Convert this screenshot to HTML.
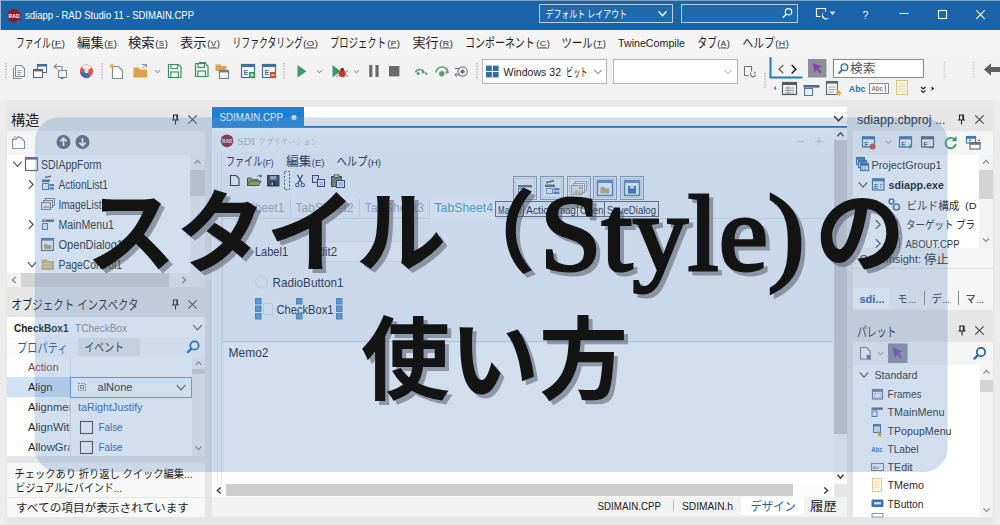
<!DOCTYPE html>
<html lang="ja"><head><meta charset="utf-8"><title>スタイル（Style)の使い方</title>
<style>
html,body{margin:0;padding:0;background:#f0f0f0;overflow:hidden}
body{width:1000px;height:525px;font-family:"Liberation Sans",sans-serif}
svg{display:block;position:absolute;left:0;top:0}
text{white-space:pre}
.j{font-family:"Liberation Sans","Noto Sans CJK JP",sans-serif}
.js{font-family:"Liberation Serif","Noto Serif CJK SC",serif}
</style></head><body>
<svg width="1000" height="525" viewBox="0 0 1000 525" shape-rendering="auto">
<rect x="0" y="0" width="1000" height="525" fill="#f0f0f0"/>
<rect x="0" y="0" width="1000" height="30" fill="#1a64a9"/>
<rect x="0" y="0" width="1000" height="1" fill="#7fa3c6"/>
<rect x="0" y="0" width="1" height="30" fill="#9db7d0"/>
<circle cx="14" cy="15.5" r="6.8" fill="#8e1b26"/>
<text x="8.6" y="17.60" font-family="Liberation Sans, sans-serif" font-size="5.6" fill="#fff" font-weight="bold" textLength="11.0" lengthAdjust="spacingAndGlyphs">RAD</text>
<text x="25" y="19.24" font-family="Liberation Sans, sans-serif" font-size="11" fill="#fff" textLength="169.0" lengthAdjust="spacingAndGlyphs">sdiapp - RAD Studio 11 - SDIMAIN.CPP</text>
<rect x="539.5" y="4.5" width="133.0" height="18.0" fill="#1f69ad" stroke="#b9cfe6" stroke-width="1"/>
<text class="j" x="545.5" y="17.6" font-size="10.5" fill="#fff" textLength="81.5" lengthAdjust="spacingAndGlyphs">デフォルト レイアウト</text>
<path d="M658.5 11.3L662.5 15.7L666.5 11.3" fill="none" stroke="#fff" stroke-width="1.3"/>
<rect x="681.5" y="4.5" width="116.0" height="18.0" fill="#1f69ad" stroke="#b9cfe6" stroke-width="1"/>
<circle cx="788.5" cy="11.8" r="3.2" fill="none" stroke="#fff" stroke-width="1.1"/>
<line x1="786.2" y1="14.2" x2="782.6" y2="17.8" stroke="#fff" stroke-width="1.3"/>
<path d="M816.5 8.5h9v3M816.5 8.5v8h4" fill="none" stroke="#fff" stroke-width="1.2"/>
<path d="M824 12a4 4 0 1 0 5.5 5.2a3.4 3.4 0 0 1-5.5-5.2z" fill="#fff"/>
<path d="M829.5 11.5h6l-3 3.6z" fill="#d6e4f2"/>
<text x="862.4" y="18.76" font-family="Liberation Sans, sans-serif" font-size="10.5" fill="#fff">?</text>
<line x1="899.5" y1="13.5" x2="908.5" y2="13.5" stroke="#fff" stroke-width="1.1"/>
<rect x="938.5" y="10.5" width="8.0" height="8.0" fill="none" stroke="#fff" stroke-width="1.1"/>
<path d="M976.3 10.399999999999999L984.7 18.8M984.7 10.399999999999999L976.3 18.8" fill="none" stroke="#fff" stroke-width="1.1"/>
<rect x="0" y="30" width="1000" height="27" fill="#f4f4f4"/>
<text class="j" x="16" y="46.8" font-size="13" fill="#1e1e1e" textLength="34.8" lengthAdjust="spacingAndGlyphs">ファイル</text>
<text x="51.3" y="46.57" font-family="Liberation Sans, sans-serif" font-size="9.4" fill="#1e1e1e">(</text>
<text x="54.8" y="46.32" font-family="Liberation Sans, sans-serif" font-size="7.6" fill="#1e1e1e" textLength="6.4" lengthAdjust="spacingAndGlyphs">F</text>
<text x="61.8" y="46.57" font-family="Liberation Sans, sans-serif" font-size="9.4" fill="#1e1e1e">)</text>
<line x1="54.6" y1="47.9" x2="61.4" y2="47.9" stroke="#1e1e1e" stroke-width="0.9"/>
<text class="j" x="77" y="46.8" font-size="13" fill="#1e1e1e" textLength="26.8" lengthAdjust="spacingAndGlyphs">編集</text>
<text x="104.3" y="46.57" font-family="Liberation Sans, sans-serif" font-size="9.4" fill="#1e1e1e">(</text>
<text x="107.8" y="46.32" font-family="Liberation Sans, sans-serif" font-size="7.6" fill="#1e1e1e" textLength="5.4" lengthAdjust="spacingAndGlyphs">E</text>
<text x="113.8" y="46.57" font-family="Liberation Sans, sans-serif" font-size="9.4" fill="#1e1e1e">)</text>
<line x1="107.6" y1="47.9" x2="113.4" y2="47.9" stroke="#1e1e1e" stroke-width="0.9"/>
<text class="j" x="128" y="46.8" font-size="13" fill="#1e1e1e" textLength="26.6" lengthAdjust="spacingAndGlyphs">検索</text>
<text x="155.3" y="46.57" font-family="Liberation Sans, sans-serif" font-size="9.4" fill="#1e1e1e">(</text>
<text x="158.8" y="46.32" font-family="Liberation Sans, sans-serif" font-size="7.6" fill="#1e1e1e" textLength="5.4" lengthAdjust="spacingAndGlyphs">S</text>
<text x="164.8" y="46.57" font-family="Liberation Sans, sans-serif" font-size="9.4" fill="#1e1e1e">)</text>
<line x1="158.6" y1="47.9" x2="164.4" y2="47.9" stroke="#1e1e1e" stroke-width="0.9"/>
<text class="j" x="180" y="46.8" font-size="13" fill="#1e1e1e" textLength="26.5" lengthAdjust="spacingAndGlyphs">表示</text>
<text x="207.3" y="46.57" font-family="Liberation Sans, sans-serif" font-size="9.4" fill="#1e1e1e">(</text>
<text x="210.8" y="46.32" font-family="Liberation Sans, sans-serif" font-size="7.6" fill="#1e1e1e" textLength="5.4" lengthAdjust="spacingAndGlyphs">V</text>
<text x="216.8" y="46.57" font-family="Liberation Sans, sans-serif" font-size="9.4" fill="#1e1e1e">)</text>
<line x1="210.6" y1="47.9" x2="216.4" y2="47.9" stroke="#1e1e1e" stroke-width="0.9"/>
<text class="j" x="232.5" y="46.8" font-size="13" fill="#1e1e1e" textLength="70.4" lengthAdjust="spacingAndGlyphs">リファクタリング</text>
<text x="303.3" y="46.57" font-family="Liberation Sans, sans-serif" font-size="9.4" fill="#1e1e1e">(</text>
<text x="306.8" y="46.32" font-family="Liberation Sans, sans-serif" font-size="7.6" fill="#1e1e1e" textLength="7.4" lengthAdjust="spacingAndGlyphs">O</text>
<text x="314.8" y="46.57" font-family="Liberation Sans, sans-serif" font-size="9.4" fill="#1e1e1e">)</text>
<line x1="306.6" y1="47.9" x2="314.4" y2="47.9" stroke="#1e1e1e" stroke-width="0.9"/>
<text class="j" x="330" y="46.8" font-size="13" fill="#1e1e1e" textLength="56" lengthAdjust="spacingAndGlyphs">プロジェクト</text>
<text x="387.3" y="46.57" font-family="Liberation Sans, sans-serif" font-size="9.4" fill="#1e1e1e">(</text>
<text x="390.8" y="46.32" font-family="Liberation Sans, sans-serif" font-size="7.6" fill="#1e1e1e" textLength="5.4" lengthAdjust="spacingAndGlyphs">P</text>
<text x="396.8" y="46.57" font-family="Liberation Sans, sans-serif" font-size="9.4" fill="#1e1e1e">)</text>
<line x1="390.6" y1="47.9" x2="396.4" y2="47.9" stroke="#1e1e1e" stroke-width="0.9"/>
<text class="j" x="412.5" y="46.8" font-size="13" fill="#1e1e1e" textLength="26.2" lengthAdjust="spacingAndGlyphs">実行</text>
<text x="439.3" y="46.57" font-family="Liberation Sans, sans-serif" font-size="9.4" fill="#1e1e1e">(</text>
<text x="442.8" y="46.32" font-family="Liberation Sans, sans-serif" font-size="7.6" fill="#1e1e1e" textLength="6.4" lengthAdjust="spacingAndGlyphs">R</text>
<text x="449.8" y="46.57" font-family="Liberation Sans, sans-serif" font-size="9.4" fill="#1e1e1e">)</text>
<line x1="442.6" y1="47.9" x2="449.4" y2="47.9" stroke="#1e1e1e" stroke-width="0.9"/>
<text class="j" x="465" y="46.8" font-size="13" fill="#1e1e1e" textLength="69.8" lengthAdjust="spacingAndGlyphs">コンポーネント</text>
<text x="536.3" y="46.57" font-family="Liberation Sans, sans-serif" font-size="9.4" fill="#1e1e1e">(</text>
<text x="539.8" y="46.32" font-family="Liberation Sans, sans-serif" font-size="7.6" fill="#1e1e1e" textLength="6.4" lengthAdjust="spacingAndGlyphs">C</text>
<text x="546.8" y="46.57" font-family="Liberation Sans, sans-serif" font-size="9.4" fill="#1e1e1e">)</text>
<line x1="539.6" y1="47.9" x2="546.4" y2="47.9" stroke="#1e1e1e" stroke-width="0.9"/>
<text class="j" x="561.5" y="46.8" font-size="13" fill="#1e1e1e" textLength="31.3" lengthAdjust="spacingAndGlyphs">ツール</text>
<text x="593.3" y="46.57" font-family="Liberation Sans, sans-serif" font-size="9.4" fill="#1e1e1e">(</text>
<text x="596.8" y="46.32" font-family="Liberation Sans, sans-serif" font-size="7.6" fill="#1e1e1e" textLength="5.4" lengthAdjust="spacingAndGlyphs">T</text>
<text x="602.8" y="46.57" font-family="Liberation Sans, sans-serif" font-size="9.4" fill="#1e1e1e">)</text>
<line x1="596.6" y1="47.9" x2="602.4" y2="47.9" stroke="#1e1e1e" stroke-width="0.9"/>
<text x="618" y="46.54" font-family="Liberation Sans, sans-serif" font-size="11" fill="#1e1e1e" textLength="67.0" lengthAdjust="spacingAndGlyphs">TwineCompile</text>
<text class="j" x="697.5" y="46.8" font-size="13" fill="#1e1e1e" textLength="19.4" lengthAdjust="spacingAndGlyphs">タブ</text>
<text x="717.3" y="46.57" font-family="Liberation Sans, sans-serif" font-size="9.4" fill="#1e1e1e">(</text>
<text x="720.8" y="46.32" font-family="Liberation Sans, sans-serif" font-size="7.6" fill="#1e1e1e" textLength="5.4" lengthAdjust="spacingAndGlyphs">A</text>
<text x="726.8" y="46.57" font-family="Liberation Sans, sans-serif" font-size="9.4" fill="#1e1e1e">)</text>
<line x1="720.6" y1="47.9" x2="726.4" y2="47.9" stroke="#1e1e1e" stroke-width="0.9"/>
<text class="j" x="742.5" y="46.8" font-size="13" fill="#1e1e1e" textLength="32.4" lengthAdjust="spacingAndGlyphs">ヘルプ</text>
<text x="775.3" y="46.57" font-family="Liberation Sans, sans-serif" font-size="9.4" fill="#1e1e1e">(</text>
<text x="778.8" y="46.32" font-family="Liberation Sans, sans-serif" font-size="7.6" fill="#1e1e1e" textLength="6.4" lengthAdjust="spacingAndGlyphs">H</text>
<text x="785.8" y="46.57" font-family="Liberation Sans, sans-serif" font-size="9.4" fill="#1e1e1e">)</text>
<line x1="778.6" y1="47.9" x2="785.4" y2="47.9" stroke="#1e1e1e" stroke-width="0.9"/>
<rect x="0" y="57" width="1000" height="43" fill="#f2f2f2"/>
<line x1="5.8" y1="63" x2="5.8" y2="79" stroke="#b0b0b0" stroke-width="1.5" stroke-dasharray="1.2 1.6"/>
<path d="M15.5 65.5h6l3 3v8h-9zM13.5 67.5v11h8" fill="none" stroke="#858b93" stroke-width="1.1"/>
<path d="M17.5 70.5h4M17.5 72.5h4M17.5 74.5h3" fill="none" stroke="#858b93" stroke-width="0.8"/>
<rect x="37.5" y="64.5" width="9.0" height="8.0" fill="#fff" stroke="#4a6f9a" stroke-width="1.1"/>
<rect x="37" y="64" width="10" height="2.6" fill="#3f6ea5"/>
<rect x="33.5" y="69.5" width="9.0" height="8.0" fill="#fff" stroke="#5b6470" stroke-width="1.1"/>
<rect x="33" y="69" width="10" height="2.4" fill="#5b6470"/>
<path d="M54 66.5h8v4M57 63.8l-3 2.7l3 2.7" fill="none" stroke="#858b93" stroke-width="1.1"/>
<rect x="58.5" y="70.5" width="8.0" height="7.0" fill="none" stroke="#858b93" stroke-width="1.1"/>
<path d="M62 79.5l2.5-2h-5z" fill="#3f6ea5"/>
<circle cx="86.5" cy="71" r="6.6" fill="#d9534a"/>
<path d="M81.5 67a6.6 6.6 0 0 1 10.5 0.5l-5.5 3.5z" fill="#e9edf3"/>
<path d="M80.2 72.5l6.3-1.5l3.8 6a6.6 6.6 0 0 1-10.1-4.5z" fill="#3c6fb0"/>
<circle cx="86.5" cy="71" r="2.2" fill="#f3d9d6"/>
<line x1="102" y1="63" x2="102" y2="79" stroke="#b0b0b0" stroke-width="1.5" stroke-dasharray="1.2 1.6"/>
<path d="M112.5 66.5h6l4 4v8h-10z" fill="#fdfdfd" stroke="#858b93" stroke-width="1.1"/>
<path d="M112 63.5v5M109.5 66h5M110.2 64.2l3.6 3.6M113.8 64.2l-3.6 3.6" fill="none" stroke="#e8a33a" stroke-width="0.9"/>
<path d="M133.5 67.5h5l1.5 2h7v8h-13.5z" fill="#e2a045"/>
<path d="M142 64.5h4.5v3M146.5 64.5l-4 3.5" fill="none" stroke="#8a8f96" stroke-width="1"/>
<path d="M155.0 70.2L157.5 72.8L160.0 70.2" fill="none" stroke="#777" stroke-width="1"/>
<path d="M168.5 64.5h10l2.5 2.5v10.5h-12.5z" fill="#eef6f0" stroke="#3f8f63" stroke-width="1.2"/>
<rect x="171" y="64.5" width="6.5" height="4" fill="none" stroke="#3f8f63" stroke-width="1.1"/>
<rect x="170.8" y="72" width="7.6" height="5.5" fill="none" stroke="#3f8f63" stroke-width="1.1"/>
<path d="M195.5 63.5h10l2.5 2.5v10.5h-12.5z" fill="#eef6f0" stroke="#3f8f63" stroke-width="1.2"/>
<rect x="198" y="63.5" width="6.5" height="4" fill="none" stroke="#3f8f63" stroke-width="1.1"/>
<rect x="197.8" y="71" width="7.6" height="5.5" fill="none" stroke="#3f8f63" stroke-width="1.1"/>
<rect x="199" y="62" width="7" height="2" fill="#3f8f63"/>
<path d="M215.5 64.5h5l1 1.5h5v5h-11z" fill="#dba24b"/>
<rect x="219.5" y="70.5" width="9.0" height="8.0" fill="#f4f6f8" stroke="#6e7f94" stroke-width="1.1"/>
<rect x="219" y="70" width="10" height="2.4" fill="#6e7f94"/>
<rect x="241.5" y="64.5" width="13.0" height="13.0" fill="#f4f8fb" stroke="#3f6f9f" stroke-width="1.2"/>
<rect x="241" y="64" width="14" height="3" fill="#3f6f9f"/>
<text x="243.6" y="75.01" font-family="Liberation Sans, sans-serif" font-size="7" fill="#3f6f9f" font-weight="bold">E</text>
<rect x="249" y="72" width="6" height="6" fill="#3f9060"/>
<path d="M250.3 75h3.4M252 73.3v3.4" fill="none" stroke="#fff" stroke-width="1"/>
<rect x="262.5" y="64.5" width="13.0" height="13.0" fill="#f4f8fb" stroke="#3f6f9f" stroke-width="1.2"/>
<rect x="262" y="64" width="14" height="3" fill="#3f6f9f"/>
<text x="264.6" y="75.01" font-family="Liberation Sans, sans-serif" font-size="7" fill="#3f6f9f" font-weight="bold">E</text>
<rect x="270" y="72" width="6" height="6" fill="#cf4b3f"/>
<path d="M271.3 75h3.4" fill="none" stroke="#fff" stroke-width="1"/>
<line x1="284" y1="63" x2="284" y2="79" stroke="#b0b0b0" stroke-width="1.5" stroke-dasharray="1.2 1.6"/>
<path d="M297.5 65l9 6.2l-9 6.2z" fill="#3f9a6a"/>
<path d="M317.0 70.2L319.5 72.8L322.0 70.2" fill="none" stroke="#777" stroke-width="1"/>
<path d="M332.5 65l8 6.2l-8 6.2z" fill="#3f9a6a"/>
<circle cx="342.2" cy="73.6" r="3.6" fill="#c7382f"/>
<circle cx="342.2" cy="69.6" r="1.8" fill="#7a2a22"/>
<path d="M338 71.5l-1.5-1M346.4 71.5l1.5-1M338 75.5l-1.6 1M346.4 75.5l1.6 1" fill="none" stroke="#7a2a22" stroke-width="0.8"/>
<path d="M354.0 70.2L356.5 72.8L359.0 70.2" fill="none" stroke="#777" stroke-width="1"/>
<rect x="369.2" y="65" width="3.2" height="12" fill="#6b6b6b"/>
<rect x="375.4" y="65" width="3.2" height="12" fill="#6b6b6b"/>
<rect x="389" y="66" width="10.4" height="10.4" fill="#6b6b6b"/>
<path d="M415.5 72.5a4.5 4 0 0 1 8.5-0.5" fill="none" stroke="#5d9a7e" stroke-width="1.4"/>
<path d="M422.2 70.2l3.2 2.6l-3.8 1z" fill="#5d9a7e"/>
<circle cx="418.2" cy="73.6" r="1.5" fill="#5d9a7e"/>
<circle cx="426.2" cy="73.8" r="1.2" fill="#5d9a7e"/>
<path d="M436 72.5a6 5.4 0 0 1 12 0" fill="none" stroke="#5d9a7e" stroke-width="1.5"/>
<path d="M446 70.4l3 2.4l-3.6 1.2z" fill="#5d9a7e"/>
<circle cx="441.8" cy="73.8" r="2.7" fill="#5d9a7e"/>
<circle cx="462.6" cy="71.5" r="4.6" fill="none" stroke="#7b8088" stroke-width="1.2"/>
<circle cx="462.6" cy="71.5" r="2.1" fill="#6b7078"/>
<path d="M455 68.5h5M455 74.8h5M456.8 73l-2 1.8l2 1.8" fill="none" stroke="#6b7078" stroke-width="1"/>
<line x1="477" y1="63" x2="477" y2="79" stroke="#b0b0b0" stroke-width="1.5" stroke-dasharray="1.2 1.6"/>
<rect x="482.5" y="59.5" width="124.0" height="24.0" fill="#fff" stroke="#b4b4b4" stroke-width="1"/>
<rect x="486" y="65.6" width="5.8" height="5.4" fill="#2f6ea8"/>
<rect x="492.8" y="65.6" width="5.8" height="5.4" fill="#2f6ea8"/>
<rect x="486" y="72" width="5.8" height="5.4" fill="#2f6ea8"/>
<rect x="492.8" y="72" width="5.8" height="5.4" fill="#2f6ea8"/>
<text x="503.5" y="76.08" font-family="Liberation Sans, sans-serif" font-size="11.4" fill="#222" textLength="57.5" lengthAdjust="spacingAndGlyphs">Windows 32</text>
<text class="j" x="566" y="76.6" font-size="12" fill="#222" textLength="21.5" lengthAdjust="spacingAndGlyphs">ビット</text>
<path d="M594.3 69.89999999999999L598 73.7L601.7 69.89999999999999" fill="none" stroke="#999" stroke-width="1.1"/>
<rect x="613.5" y="59.5" width="124.0" height="24.0" fill="#fff" stroke="#b4b4b4" stroke-width="1"/>
<path d="M724.3 69.89999999999999L728 73.7L731.7 69.89999999999999" fill="none" stroke="#c4c4c4" stroke-width="1.1"/>
<path d="M744.5 66.5h7v5M744.5 66.5v9h4" fill="none" stroke="#6f747b" stroke-width="1.1"/>
<path d="M751 72.5a2.6 2.6 0 1 0 4.6 2.2" fill="none" stroke="#6f747b" stroke-width="1.1"/>
<path d="M753.5 71.5l2.2 0.6l-0.8 2z" fill="#6f747b"/>
<line x1="765" y1="73" x2="765" y2="89" stroke="#b0b0b0" stroke-width="1.5" stroke-dasharray="1.2 1.6"/>
<path d="M770.5 57v20.5h32" fill="none" stroke="#2478bd" stroke-width="2"/>
<path d="M783.3000000000001 65.0L779.1 69.2L783.3000000000001 73.4" fill="none" stroke="#555" stroke-width="1.2"/>
<path d="M791.6999999999999 65.0L795.9 69.2L791.6999999999999 73.4" fill="none" stroke="#1a1a1a" stroke-width="1.4"/>
<rect x="808" y="59" width="18.5" height="18.5" fill="#8d8f95"/>
<path d="M812.5 63l9.5 3.6l-3.6 1.6l3.2 4l-1.7 1.3l-3.1-4l-2.2 2.9z" fill="#8a3fb8"/>
<rect x="833.5" y="59.5" width="90.0" height="18.0" fill="#fff" stroke="#8c8c8c" stroke-width="1.1"/>
<circle cx="844.4" cy="67.2" r="3.3" fill="none" stroke="#2b6cb3" stroke-width="1.4"/>
<line x1="842" y1="69.8" x2="838.6" y2="73.6" stroke="#2b6cb3" stroke-width="1.8"/>
<text class="j" x="850" y="73.2" font-size="12.4" fill="#555" textLength="25.4" lengthAdjust="spacingAndGlyphs">検索</text>
<line x1="944.5" y1="62" x2="944.5" y2="78" stroke="#c4c4c4" stroke-width="1.5" stroke-dasharray="1.2 1.6"/>
<line x1="973.5" y1="62" x2="973.5" y2="78" stroke="#c4c4c4" stroke-width="1.5" stroke-dasharray="1.2 1.6"/>
<path d="M984 69.5l7-6.2v3.7h9v5h-9v3.7z" fill="#5e5e5e"/>
<path d="M776 86l-2.6 2.2l2.6 2.2z" fill="#888"/>
<rect x="782.5" y="82.5" width="14.0" height="12.0" fill="#f4f4f4" stroke="#555b63" stroke-width="1.2"/>
<rect x="782" y="82" width="15" height="3" fill="#555b63"/>
<path d="M785 88h9M785 90.5h9M785 93h9M788 86v8" fill="none" stroke="#7a8088" stroke-width="0.8"/>
<rect x="803.5" y="85" width="16" height="2.6" fill="#5d6671"/>
<rect x="804.5" y="88.5" width="8.0" height="7.0" fill="#e9f0f8" stroke="#4b78b0" stroke-width="1"/>
<rect x="806" y="86" width="3" height="1" fill="#4b78b0"/>
<rect x="826.5" y="81.5" width="11.0" height="13.0" fill="#f6f6f6" stroke="#5d6671" stroke-width="1.1"/>
<rect x="826" y="81" width="12" height="2.6" fill="#5d6671"/>
<path d="M828.5 87h7M828.5 89.5h7M828.5 92h5" fill="none" stroke="#8a9098" stroke-width="0.8"/>
<path d="M836.5 88.5l5.6 5l-2.6 0.2l1 2.2l-1.2 0.4l-1-2.2l-1.8 1.6z" fill="#e6a13c"/>
<text x="848.8" y="92.44" font-family="Liberation Sans, sans-serif" font-size="9.6" fill="#2f6fb3" font-weight="bold" textLength="16.6" lengthAdjust="spacingAndGlyphs">Abc</text>
<rect x="869.5" y="83.5" width="19.0" height="10.0" fill="#fbfbfb" stroke="#8a8a8a" stroke-width="1"/>
<text x="871.4" y="91.16" font-family="Liberation Sans, sans-serif" font-size="6.6" fill="#888" font-weight="bold" textLength="11.6" lengthAdjust="spacingAndGlyphs">Abc</text>
<line x1="885.4" y1="85" x2="885.4" y2="92" stroke="#666" stroke-width="0.8"/>
<rect x="896.5" y="80.5" width="11.0" height="14.0" fill="#fdf6e1" stroke="#e2c57d" stroke-width="1"/>
<path d="M898.5 84h7M898.5 86.5h7M898.5 89h7M898.5 91.5h7" fill="none" stroke="#e4cf9a" stroke-width="0.9"/>
<path d="M921 87l2.2 2l2.2-2M921 90.4l2.2 2l2.2-2" fill="none" stroke="#222" stroke-width="1.2"/>
<path d="M931.6 86.4l2.6 2.2l-2.6 2.2z" fill="#111"/>
<rect x="0" y="100" width="1000" height="425" fill="#e6e6e6"/>
<rect x="0" y="100" width="1000" height="7" fill="#e9e9e9"/>
<rect x="0" y="100" width="6" height="425" fill="#ececec"/>
<rect x="994" y="100" width="6" height="425" fill="#ececec"/>
<text class="j" x="11" y="124.6" font-size="14" fill="#1e1e1e" textLength="28.4" lengthAdjust="spacingAndGlyphs">構造</text>
<path d="M173.5 115.0h4v5h-4zM172.0 120.0h7M175.5 120.0v4.5" fill="none" stroke="#222" stroke-width="1.1"/>
<line x1="177.0" y1="115.0" x2="177.0" y2="120.0" stroke="#222" stroke-width="1.3"/>
<path d="M188.3 115.3L196.7 123.7M196.7 115.3L188.3 123.7" fill="none" stroke="#444" stroke-width="1.1"/>
<rect x="7" y="131" width="198" height="24" fill="#f5f5f5"/>
<path d="M12.5 139.5h3.5l1.2-2.2h3.4l3.9 4v7.2h-12z" fill="#fbfbfb" stroke="#8a8f96" stroke-width="1.1"/>
<path d="M14 139.5v-2.5h2M18.4 136v2.2" fill="none" stroke="#8a8f96" stroke-width="0.9"/>
<circle cx="63.5" cy="142" r="7" fill="#5d6671"/>
<path d="M63.5 146v-7.6M60.3 141.4L63.5 138.2L66.7 141.4" fill="none" stroke="#fff" stroke-width="1.7"/>
<circle cx="82.5" cy="142" r="7" fill="#5d6671"/>
<path d="M82.5 138v7.6M79.3 142.6L82.5 145.8L85.7 142.6" fill="none" stroke="#fff" stroke-width="1.7"/>
<rect x="7" y="155" width="198" height="132" fill="#ffffff"/>
<path d="M13.3 161.7L17.5 166.3L21.7 161.7" fill="none" stroke="#555" stroke-width="1.2"/>
<rect x="25.5" y="157.5" width="12.0" height="13.0" fill="#fff" stroke="#6e5a8a" stroke-width="1.2"/>
<rect x="25" y="157" width="13" height="2.6" fill="#7a5fa0"/>
<text x="41" y="168.70" font-family="Liberation Sans, sans-serif" font-size="12" fill="#2a2a2a" textLength="60.5" lengthAdjust="spacingAndGlyphs">SDIAppForm</text>
<path d="M28.8 180.2L33.2 184.5L28.8 188.8" fill="none" stroke="#555" stroke-width="1.2"/>
<rect x="42" y="179.5" width="8" height="2.6" fill="#5d6671"/>
<path d="M45 177.5l6-1.2" fill="none" stroke="#5d6671" stroke-width="1.4"/>
<rect x="42.5" y="183.5" width="6.0" height="6.0" fill="#eef3f9" stroke="#4b78b0" stroke-width="1"/>
<rect x="49.5" y="184" width="4.5" height="2.2" fill="#4b78b0"/>
<rect x="49.5" y="187.4" width="4.5" height="2.2" fill="#4b78b0"/>
<text x="58.5" y="188.90" font-family="Liberation Sans, sans-serif" font-size="12" fill="#2a2a2a" textLength="49.5" lengthAdjust="spacingAndGlyphs">ActionList1</text>
<rect x="45.5" y="198.5" width="9.0" height="7.0" fill="#fff" stroke="#7b828b" stroke-width="1"/>
<rect x="43.5" y="200.5" width="9.0" height="7.0" fill="#fff" stroke="#7b828b" stroke-width="1"/>
<rect x="41.5" y="202.5" width="9.0" height="7.0" fill="#f3f3f3" stroke="#7b828b" stroke-width="1"/>
<path d="M43 208l2.4-2.6l1.8 1.6l1.4-1l1.2 2z" fill="#b8a27a"/>
<text x="58.5" y="208.90" font-family="Liberation Sans, sans-serif" font-size="12" fill="#2a2a2a" textLength="48.5" lengthAdjust="spacingAndGlyphs">ImageList1</text>
<path d="M28.8 220.2L33.2 224.5L28.8 228.8" fill="none" stroke="#555" stroke-width="1.2"/>
<rect x="42" y="219.5" width="12" height="2.4" fill="#5d6671"/>
<rect x="42.5" y="223.5" width="5.0" height="6.0" fill="#eef3f9" stroke="#4b78b0" stroke-width="1"/>
<rect x="43.5" y="220.2" width="2.4" height="1" fill="#c8d4e4"/>
<text x="58.5" y="228.90" font-family="Liberation Sans, sans-serif" font-size="12" fill="#2a2a2a" textLength="55.5" lengthAdjust="spacingAndGlyphs">MainMenu1</text>
<rect x="41.5" y="238.5" width="12.0" height="12.0" fill="#f4f8fb" stroke="#4b78b0" stroke-width="1.2"/>
<rect x="41" y="238" width="13" height="2.6" fill="#4b78b0"/>
<path d="M44 244h3l0.8 1h3.6v4h-7.4z" fill="#c9a56a"/>
<text x="58.5" y="248.90" font-family="Liberation Sans, sans-serif" font-size="12" fill="#2a2a2a" textLength="64.5" lengthAdjust="spacingAndGlyphs">OpenDialog1</text>
<path d="M27.8 262.2L32 266.8L36.2 262.2" fill="none" stroke="#555" stroke-width="1.2"/>
<path d="M41.5 259.5h5l1 1.5h6.5v9h-12.5z" fill="#dcb670"/>
<rect x="43.5" y="263" width="8" height="1.4" fill="#f0d9a8"/>
<rect x="43.5" y="266" width="8" height="1.4" fill="#f0d9a8"/>
<text x="58.5" y="268.90" font-family="Liberation Sans, sans-serif" font-size="12" fill="#2a2a2a" textLength="63.5" lengthAdjust="spacingAndGlyphs">PageControl1</text>
<rect x="190" y="155" width="15" height="118" fill="#f3f3f3"/>
<rect x="190" y="170" width="15" height="26" fill="#d4d4d4"/>
<path d="M194.5 163.7L197.5 160.3L200.5 163.7" fill="none" stroke="#8a8a8a" stroke-width="1.2"/>
<rect x="7" y="273" width="198" height="14" fill="#f3f3f3"/>
<rect x="21" y="273" width="148" height="14" fill="#d4d4d4"/>
<path d="M15.7 277.0L12.3 280L15.7 283.0" fill="none" stroke="#8a8a8a" stroke-width="1.2"/>
<path d="M182.3 277.0L185.7 280L182.3 283.0" fill="none" stroke="#8a8a8a" stroke-width="1.2"/>
<text class="j" x="11.5" y="309.4" font-size="13" fill="#1e1e1e" textLength="127" lengthAdjust="spacingAndGlyphs">オブジェクト インスペクタ</text>
<path d="M173.5 300.0h4v5h-4zM172.0 305.0h7M175.5 305.0v4.5" fill="none" stroke="#222" stroke-width="1.1"/>
<line x1="177.0" y1="300.0" x2="177.0" y2="305.0" stroke="#222" stroke-width="1.3"/>
<path d="M188.3 300.3L196.7 308.7M196.7 300.3L188.3 308.7" fill="none" stroke="#444" stroke-width="1.1"/>
<rect x="7" y="317" width="198" height="20" fill="#ffffff"/>
<text x="14" y="332.08" font-family="Liberation Sans, sans-serif" font-size="11.4" fill="#1a1a1a" font-weight="bold" textLength="54.5" lengthAdjust="spacingAndGlyphs">CheckBox1</text>
<text x="75" y="332.08" font-family="Liberation Sans, sans-serif" font-size="11.4" fill="#8c8c8c" textLength="52.0" lengthAdjust="spacingAndGlyphs">TCheckBox</text>
<path d="M193.3 325.2L197.5 329.8L201.7 325.2" fill="none" stroke="#555" stroke-width="1.2"/>
<rect x="7" y="337" width="198" height="20" fill="#fbfbfb"/>
<text class="j" x="17" y="352.2" font-size="13" fill="#1d62a6" textLength="50.5" lengthAdjust="spacingAndGlyphs">プロパティ</text>
<rect x="78" y="338" width="62" height="18" fill="#ebebeb"/>
<text class="j" x="84.5" y="352" font-size="12" fill="#1e1e1e" textLength="39.5" lengthAdjust="spacingAndGlyphs">イベント</text>
<circle cx="194.5" cy="345.5" r="4.2" fill="none" stroke="#1d62a6" stroke-width="1.7"/>
<line x1="191.56" y1="348.44" x2="187.3" y2="352.7" stroke="#1d62a6" stroke-width="2.3"/>
<rect x="7" y="357" width="198" height="99" fill="#ffffff"/>
<rect x="7" y="377" width="63" height="20" fill="#cfe3f7"/>
<line x1="70.5" y1="357" x2="70.5" y2="456" stroke="#e4e4e4" stroke-width="1"/>
<text x="28" y="371.41" font-family="Liberation Sans, sans-serif" font-size="11.2" fill="#8c3b2e" textLength="30.5" lengthAdjust="spacingAndGlyphs">Action</text>
<text x="28" y="391.41" font-family="Liberation Sans, sans-serif" font-size="11.2" fill="#1e1e1e" textLength="24.5" lengthAdjust="spacingAndGlyphs">Align</text>
<rect x="70.5" y="377.5" width="121.0" height="20.0" fill="#fff" stroke="#6ea4dc" stroke-width="1.1"/>
<rect x="78.5" y="383.5" width="7.0" height="7.0" fill="none" stroke="#777" stroke-width="0.9" stroke-dasharray="1.5 1"/>
<rect x="80.6" y="385.6" width="2.8" height="2.8" fill="none" stroke="#666" stroke-width="0.8"/>
<text x="97.5" y="391.41" font-family="Liberation Sans, sans-serif" font-size="11.2" fill="#1e1e1e" textLength="35.0" lengthAdjust="spacingAndGlyphs">alNone</text>
<path d="M176.8 385.2L181 389.8L185.2 385.2" fill="none" stroke="#555" stroke-width="1.2"/>
<clipPath id="cpL"><rect x="7" y="357" width="62.5" height="99"/></clipPath>
<text x="28" y="411.41" font-family="Liberation Sans, sans-serif" font-size="11.2" fill="#1e1e1e" clip-path="url(#cpL)">Alignment</text>
<text x="78" y="411.41" font-family="Liberation Sans, sans-serif" font-size="11.2" fill="#2c62a2" textLength="64.5" lengthAdjust="spacingAndGlyphs">taRightJustify</text>
<text x="28" y="431.41" font-family="Liberation Sans, sans-serif" font-size="11.2" fill="#1e1e1e" clip-path="url(#cpL)">AlignWithMargins</text>
<rect x="80.5" y="421.5" width="12.0" height="12.0" fill="#fff" stroke="#444" stroke-width="1.1"/>
<text x="98.5" y="431.41" font-family="Liberation Sans, sans-serif" font-size="11.2" fill="#2c62a2" textLength="24.0" lengthAdjust="spacingAndGlyphs">False</text>
<text x="28" y="451.41" font-family="Liberation Sans, sans-serif" font-size="11.2" fill="#1e1e1e" clip-path="url(#cpL)">AllowGrayed</text>
<rect x="80.5" y="441.5" width="12.0" height="12.0" fill="#fff" stroke="#444" stroke-width="1.1"/>
<text x="98.5" y="451.41" font-family="Liberation Sans, sans-serif" font-size="11.2" fill="#2c62a2" textLength="24.0" lengthAdjust="spacingAndGlyphs">False</text>
<rect x="192" y="357" width="13" height="99" fill="#f3f3f3"/>
<rect x="192" y="369" width="13" height="5" fill="#d4d4d4"/>
<path d="M195.5 365.2L198.5 361.8L201.5 365.2" fill="none" stroke="#8a8a8a" stroke-width="1.2"/>
<path d="M195.5 446.3L198.5 449.7L201.5 446.3" fill="none" stroke="#8a8a8a" stroke-width="1.2"/>
<rect x="7" y="463" width="198" height="34" fill="#f7f7f7"/>
<text class="j" x="14.5" y="478.4" font-size="11.5" fill="#1e1e1e" textLength="178" lengthAdjust="spacingAndGlyphs">チェックあり 折り返し クイック編集...</text>
<text class="j" x="15.5" y="492.2" font-size="11.5" fill="#1e1e1e" textLength="106.5" lengthAdjust="spacingAndGlyphs">ビジュアルにバインド...</text>
<rect x="7" y="498" width="198" height="19" fill="#f7f7f7"/>
<text class="j" x="16" y="512.4" font-size="11.5" fill="#1e1e1e" textLength="173" lengthAdjust="spacingAndGlyphs">すべての項目が表示されています</text>
<rect x="212" y="107" width="635" height="21" fill="#ffffff"/>
<rect x="212" y="126" width="635" height="1.8" fill="#1c66a4"/>
<rect x="212" y="107" width="92" height="20" fill="#1e80d4"/>
<text x="219.5" y="121.34" font-family="Liberation Sans, sans-serif" font-size="11" fill="#e8f2fc" textLength="63.5" lengthAdjust="spacingAndGlyphs">SDIMAIN.CPP</text>
<circle cx="294" cy="117.5" r="2.6" fill="#cfe2f5"/>
<path d="M834.2 116.2L838.5 120.8L842.8 116.2" fill="none" stroke="#222" stroke-width="1.5"/>
<rect x="212" y="128" width="622" height="356" fill="#ffffff"/>
<rect x="834" y="128" width="13" height="356" fill="#fafafa"/>
<rect x="834" y="140" width="13" height="294" fill="#cdcdcd"/>
<path d="M837.5 136.2L840.5 132.8L843.5 136.2" fill="none" stroke="#333" stroke-width="1.3"/>
<path d="M837.5 474.8L840.5 478.2L843.5 474.8" fill="none" stroke="#333" stroke-width="1.3"/>
<rect x="212" y="484" width="622" height="13" fill="#fbfbfb"/>
<rect x="226" y="484" width="567" height="12" fill="#cdcdcd"/>
<path d="M220.7 487.5L217.3 490.5L220.7 493.5" fill="none" stroke="#333" stroke-width="1.3"/>
<path d="M824.3 487.5L827.7 490.5L824.3 493.5" fill="none" stroke="#333" stroke-width="1.3"/>
<rect x="212" y="497" width="635" height="20" fill="#f2f2f2"/>
<text x="597.5" y="509.59" font-family="Liberation Sans, sans-serif" font-size="10.6" fill="#222" textLength="63.5" lengthAdjust="spacingAndGlyphs">SDIMAIN.CPP</text>
<line x1="673.5" y1="500" x2="673.5" y2="511" stroke="#b8b8b8" stroke-width="1"/>
<text x="682" y="509.59" font-family="Liberation Sans, sans-serif" font-size="10.6" fill="#222" textLength="51.0" lengthAdjust="spacingAndGlyphs">SDIMAIN.h</text>
<rect x="741" y="497" width="63" height="18" fill="#ffffff"/>
<text class="j" x="750.5" y="510.6" font-size="12" fill="#1d62a6" textLength="45.5" lengthAdjust="spacingAndGlyphs">デザイン</text>
<text class="j" x="810" y="510.7" font-size="12.5" fill="#222" textLength="26.8" lengthAdjust="spacingAndGlyphs">履歴</text>
<rect x="213" y="131" width="620" height="341" fill="#f5f6fa"/>
<rect x="213" y="131" width="620" height="21" fill="#fafbfd"/>
<line x1="217.5" y1="152" x2="217.5" y2="484" stroke="#e6eaf2" stroke-width="1"/>
<line x1="221.5" y1="152" x2="221.5" y2="484" stroke="#e6eaf2" stroke-width="1"/>
<circle cx="227" cy="140.8" r="6.4" fill="#8e1b26"/>
<text x="222" y="142.76" font-family="Liberation Sans, sans-serif" font-size="5.2" fill="#fff" font-weight="bold" textLength="10.2" lengthAdjust="spacingAndGlyphs">RAD</text>
<text x="237.5" y="145.12" font-family="Liberation Serif, sans-serif" font-size="10.4" fill="#a9b1be" textLength="17.5" lengthAdjust="spacingAndGlyphs">SDI</text>
<text class="js" x="258.5" y="145.2" font-size="9.6" fill="#a9b1be" textLength="59.5" lengthAdjust="spacingAndGlyphs">アプリケーション</text>
<line x1="797" y1="141.5" x2="804" y2="141.5" stroke="#c3c9d2" stroke-width="1.2"/>
<path d="M815 141.5h8M819 137.5v8" fill="none" stroke="#c3c9d2" stroke-width="1.2"/>
<text class="j" x="226" y="165.9" font-size="12.4" fill="#0f1528" textLength="36.2" lengthAdjust="spacingAndGlyphs">ファイル</text>
<text x="262.8" y="165.64" font-family="Liberation Sans, sans-serif" font-size="9.6" fill="#0f1528" textLength="10.7" lengthAdjust="spacingAndGlyphs">(F)</text>
<text class="j" x="286" y="165.9" font-size="12.4" fill="#0f1528" textLength="25.3" lengthAdjust="spacingAndGlyphs">編集</text>
<text x="311.8" y="165.64" font-family="Liberation Sans, sans-serif" font-size="9.6" fill="#0f1528" textLength="12.7" lengthAdjust="spacingAndGlyphs">(E)</text>
<text class="j" x="336.5" y="165.9" font-size="12.4" fill="#0f1528" textLength="31" lengthAdjust="spacingAndGlyphs">ヘルプ</text>
<text x="367.8" y="165.64" font-family="Liberation Sans, sans-serif" font-size="9.6" fill="#0f1528" textLength="13.2" lengthAdjust="spacingAndGlyphs">(H)</text>
<path d="M230.5 175.5h5.5l3 3v7h-8.5z" fill="#fdfdfd" stroke="#1d2436" stroke-width="1.1"/>
<path d="M247.5 185.5v-7.5h4l1.2 1.6h5.3v2M247.5 185.5l2.6-4.5h11l-2.6 4.5z" fill="#93a445" stroke="#39431b" stroke-width="1"/>
<path d="M257.5 176.5c1.2-1.4 2.6-1.4 3.6 0M261.3 174.8v1.9h-1.9" fill="none" stroke="#222" stroke-width="0.8"/>
<rect x="267.5" y="175.5" width="11.5" height="10.5" fill="#2c3a4a" stroke="#141c28" stroke-width="1"/>
<rect x="270" y="176" width="6.2" height="3.6" fill="#9aa6b2"/>
<rect x="270" y="181.6" width="6.4" height="4.2" fill="#10161f"/>
<rect x="271.4" y="182.6" width="1.6" height="2.4" fill="#c7ced6"/>
<rect x="284.5" y="171.5" width="5.0" height="18.0" fill="none" stroke="#444" stroke-width="1" stroke-dasharray="2 1.6"/>
<path d="M297.4 174.8l4.6 8.4M302.6 174.8l-4.6 8.4" fill="none" stroke="#23314f" stroke-width="1.2"/>
<circle cx="297.3" cy="185" r="1.7" fill="none" stroke="#3552a3" stroke-width="1.1"/>
<circle cx="302.7" cy="185" r="1.7" fill="none" stroke="#3552a3" stroke-width="1.1"/>
<rect x="312.5" y="175.5" width="6.0" height="7.0" fill="#dfe6ee" stroke="#26344d" stroke-width="1"/>
<rect x="317.5" y="179.5" width="7.0" height="7.0" fill="#eef2f7" stroke="#26344d" stroke-width="1"/>
<path d="M319.4 182.4h3.4M319.4 184.4h3.4" fill="none" stroke="#5b6a86" stroke-width="0.7"/>
<rect x="331.5" y="176.5" width="10.0" height="10.0" fill="#6b7a5a" stroke="#2b3325" stroke-width="1"/>
<rect x="334" y="174.8" width="5" height="2.6" fill="#cfd5c2" stroke="#2b3325" stroke-width="0.8"/>
<rect x="336.5" y="180.5" width="8.0" height="7.0" fill="#eef2f7" stroke="#26344d" stroke-width="1"/>
<path d="M338.4 183h4.2M338.4 185h4.2" fill="none" stroke="#5b6a86" stroke-width="0.7"/>
<line x1="222" y1="218.5" x2="833" y2="218.5" stroke="#dde1ea" stroke-width="1"/>
<line x1="222.5" y1="197" x2="222.5" y2="340" stroke="#dde1ea" stroke-width="1"/>
<rect x="430" y="197" width="67" height="22" fill="#fdfdff"/>
<line x1="290.5" y1="198" x2="290.5" y2="217" stroke="#dde1ea" stroke-width="1"/>
<line x1="359.5" y1="198" x2="359.5" y2="217" stroke="#dde1ea" stroke-width="1"/>
<line x1="429.5" y1="198" x2="429.5" y2="217" stroke="#dde1ea" stroke-width="1"/>
<text x="227.5" y="211.60" font-family="Liberation Sans, sans-serif" font-size="13.4" fill="#a2a9b4" textLength="57.0" lengthAdjust="spacingAndGlyphs">TabSheet1</text>
<text x="295.5" y="211.60" font-family="Liberation Sans, sans-serif" font-size="13.4" fill="#a2a9b4" textLength="58.0" lengthAdjust="spacingAndGlyphs">TabSheet2</text>
<text x="364.5" y="211.60" font-family="Liberation Sans, sans-serif" font-size="13.4" fill="#a2a9b4" textLength="59.5" lengthAdjust="spacingAndGlyphs">TabSheet3</text>
<text x="434.5" y="211.60" font-family="Liberation Sans, sans-serif" font-size="13.4" fill="#479fb2" textLength="58.5" lengthAdjust="spacingAndGlyphs">TabSheet4</text>
<text x="255" y="256.27" font-family="Liberation Sans, sans-serif" font-size="13.6" fill="#151a28" textLength="33.0" lengthAdjust="spacingAndGlyphs">Label1</text>
<rect x="307.5" y="241.5" width="123.0" height="20.0" fill="#fdfdff" stroke="#e3e7f0" stroke-width="1"/>
<text x="311" y="256.27" font-family="Liberation Sans, sans-serif" font-size="13.6" fill="#151a28" textLength="26.0" lengthAdjust="spacingAndGlyphs">Edit2</text>
<circle cx="261.5" cy="282" r="6" fill="#f4f7fc" stroke="#d5dbe6" stroke-width="1"/>
<text x="272.5" y="287.27" font-family="Liberation Sans, sans-serif" font-size="13.6" fill="#151a28" textLength="71.0" lengthAdjust="spacingAndGlyphs">RadioButton1</text>
<rect x="263.5" y="303.5" width="9.0" height="11.0" fill="#f7f9fd" stroke="#dde1ea" stroke-width="1"/>
<text x="276.5" y="314.27" font-family="Liberation Sans, sans-serif" font-size="13.6" fill="#151a28" textLength="57.0" lengthAdjust="spacingAndGlyphs">CheckBox1</text>
<rect x="255.5" y="298.5" width="5.5" height="5.5" fill="#5b9ad6" stroke="#3d78b8" stroke-width="0.9"/>
<rect x="255.5" y="306" width="5.5" height="5.5" fill="#5b9ad6" stroke="#3d78b8" stroke-width="0.9"/>
<rect x="255.5" y="313.5" width="5.5" height="5.5" fill="#5b9ad6" stroke="#3d78b8" stroke-width="0.9"/>
<rect x="336.5" y="298.5" width="5.5" height="5.5" fill="#5b9ad6" stroke="#3d78b8" stroke-width="0.9"/>
<rect x="336.5" y="306" width="5.5" height="5.5" fill="#5b9ad6" stroke="#3d78b8" stroke-width="0.9"/>
<rect x="336.5" y="313.5" width="5.5" height="5.5" fill="#5b9ad6" stroke="#3d78b8" stroke-width="0.9"/>
<rect x="296.5" y="298.5" width="5.5" height="5.5" fill="#5b9ad6" stroke="#3d78b8" stroke-width="0.9"/>
<rect x="296.5" y="313.5" width="5.5" height="5.5" fill="#5b9ad6" stroke="#3d78b8" stroke-width="0.9"/>
<line x1="222" y1="341.8" x2="833" y2="341.8" stroke="#d3dae8" stroke-width="1.4"/>
<rect x="224" y="342.5" width="609" height="130" fill="#ffffff"/>
<text x="228.5" y="357.27" font-family="Liberation Sans, sans-serif" font-size="13.6" fill="#151a28" textLength="40.0" lengthAdjust="spacingAndGlyphs">Memo2</text>
<rect x="513.5" y="176.5" width="23.0" height="23.0" fill="#f4f7fb" stroke="#8f98a6" stroke-width="1"/>
<rect x="515.5" y="178.5" width="19.0" height="19.0" fill="none" stroke="#cfd6e0" stroke-width="1"/>
<rect x="540.5" y="176.5" width="23.0" height="23.0" fill="#f4f7fb" stroke="#8f98a6" stroke-width="1"/>
<rect x="542.5" y="178.5" width="19.0" height="19.0" fill="none" stroke="#cfd6e0" stroke-width="1"/>
<rect x="567.5" y="176.5" width="23.0" height="23.0" fill="#f4f7fb" stroke="#8f98a6" stroke-width="1"/>
<rect x="569.5" y="178.5" width="19.0" height="19.0" fill="none" stroke="#cfd6e0" stroke-width="1"/>
<rect x="593.5" y="176.5" width="23.0" height="23.0" fill="#f4f7fb" stroke="#8f98a6" stroke-width="1"/>
<rect x="595.5" y="178.5" width="19.0" height="19.0" fill="none" stroke="#cfd6e0" stroke-width="1"/>
<rect x="620.5" y="176.5" width="23.0" height="23.0" fill="#f4f7fb" stroke="#8f98a6" stroke-width="1"/>
<rect x="622.5" y="178.5" width="19.0" height="19.0" fill="none" stroke="#cfd6e0" stroke-width="1"/>
<rect x="518" y="185" width="14" height="2.4" fill="#5d6671"/>
<rect x="518.5" y="188.5" width="6.0" height="6.0" fill="#eef3f9" stroke="#4b78b0" stroke-width="1"/>
<rect x="545" y="184.5" width="10" height="2.6" fill="#5d6671"/>
<path d="M546 182.6l8-2" fill="none" stroke="#5d6671" stroke-width="1.6"/>
<rect x="546.5" y="188.5" width="6.0" height="5.0" fill="#eef3f9" stroke="#7b8ea8" stroke-width="1"/>
<rect x="553.5" y="188" width="6" height="2.4" fill="#4b78b0"/>
<rect x="553.5" y="191.6" width="6" height="2.4" fill="#4b78b0"/>
<rect x="575.5" y="181.5" width="11.0" height="9.0" fill="#fff" stroke="#9aa0a8" stroke-width="1"/>
<rect x="573.5" y="183.5" width="11.0" height="9.0" fill="#fff" stroke="#9aa0a8" stroke-width="1"/>
<rect x="571.5" y="185.5" width="11.0" height="9.0" fill="#f4ece0" stroke="#9aa0a8" stroke-width="1"/>
<path d="M573 193.5l3-4l2.4 2l1.6-1.2l1.8 3.2z" fill="#d2b98c"/>
<circle cx="580" cy="188" r="1.1" fill="#c96a5f"/>
<rect x="597.5" y="180.5" width="15.0" height="15.0" fill="#f4f8fb" stroke="#4b78b0" stroke-width="1.4"/>
<rect x="597" y="180" width="16" height="3" fill="#5c86ba"/>
<path d="M600.5 187h3.4l1 1.2h4.4v5.3h-8.8z" fill="#c9a56a"/>
<rect x="624.5" y="180.5" width="15.0" height="15.0" fill="#f4f8fb" stroke="#4b78b0" stroke-width="1.4"/>
<rect x="624" y="180" width="16" height="3" fill="#5c86ba"/>
<rect x="628" y="186" width="8" height="7.6" fill="#3b6cab"/>
<rect x="630" y="186" width="4" height="2.6" fill="#dfe8f2"/>
<rect x="495.5" y="201.5" width="28.0" height="15.0" fill="#f2f5fa" stroke="#59606c" stroke-width="1"/>
<text x="498" y="213.55" font-family="Liberation Sans, sans-serif" font-size="11.6" fill="#151a28" textLength="24.0" lengthAdjust="spacingAndGlyphs">MainM</text>
<rect x="523.5" y="201.5" width="28.0" height="15.0" fill="#f2f5fa" stroke="#59606c" stroke-width="1"/>
<text x="526" y="213.55" font-family="Liberation Sans, sans-serif" font-size="11.6" fill="#151a28" textLength="23.0" lengthAdjust="spacingAndGlyphs">Actio</text>
<rect x="551.5" y="201.5" width="26.0" height="15.0" fill="#f2f5fa" stroke="#59606c" stroke-width="1"/>
<text x="554.5" y="213.55" font-family="Liberation Sans, sans-serif" font-size="11.6" fill="#151a28" textLength="21.5" lengthAdjust="spacingAndGlyphs">Imag</text>
<rect x="577.5" y="201.5" width="27.0" height="15.0" fill="#f2f5fa" stroke="#59606c" stroke-width="1"/>
<text x="580" y="213.55" font-family="Liberation Sans, sans-serif" font-size="11.6" fill="#151a28" textLength="23.5" lengthAdjust="spacingAndGlyphs">Open</text>
<rect x="604.5" y="201.5" width="54.0" height="15.0" fill="#f2f5fa" stroke="#59606c" stroke-width="1"/>
<text x="607" y="213.55" font-family="Liberation Sans, sans-serif" font-size="11.6" fill="#151a28" textLength="49.0" lengthAdjust="spacingAndGlyphs">SaveDialog</text>
<text x="857" y="124.04" font-family="Liberation Sans, sans-serif" font-size="12.4" fill="#1e1e1e" textLength="88.5" lengthAdjust="spacingAndGlyphs">sdiapp.cbproj ...</text>
<path d="M959.5 115.0h4v5h-4zM958.0 120.0h7M961.5 120.0v4.5" fill="none" stroke="#222" stroke-width="1.1"/>
<line x1="963.0" y1="115.0" x2="963.0" y2="120.0" stroke="#222" stroke-width="1.3"/>
<path d="M975.3 115.3L983.7 123.7M983.7 115.3L975.3 123.7" fill="none" stroke="#444" stroke-width="1.1"/>
<rect x="853" y="131" width="140" height="24" fill="#f5f5f5"/>
<rect x="862.5" y="137.0" width="12.0" height="10.0" fill="#f4f8fb" stroke="#3f6f9f" stroke-width="1.2"/>
<rect x="862" y="136.5" width="13" height="2.8" fill="#3f6f9f"/>
<text x="864.2" y="146.56" font-family="Liberation Sans, sans-serif" font-size="6.6" fill="#3f6f9f" font-weight="bold">E</text>
<circle cx="872.6" cy="146.4" r="3" fill="#d2453f"/>
<path d="M886.0 140.7L888.5 143.3L891.0 140.7" fill="none" stroke="#888" stroke-width="1"/>
<rect x="899.5" y="137.0" width="12.0" height="10.0" fill="#f4f8fb" stroke="#3f6f9f" stroke-width="1.2"/>
<rect x="899" y="136.5" width="13" height="2.8" fill="#3f6f9f"/>
<text x="901.2" y="146.56" font-family="Liberation Sans, sans-serif" font-size="6.6" fill="#3f6f9f" font-weight="bold">E</text>
<path d="M908 146.5h4M910 144.5v4" fill="none" stroke="#3f9060" stroke-width="1.2"/>
<rect x="921.5" y="137.0" width="12.0" height="10.0" fill="#f4f8fb" stroke="#59616c" stroke-width="1.2"/>
<rect x="921" y="136.5" width="13" height="2.8" fill="#59616c"/>
<text x="923.2" y="146.56" font-family="Liberation Sans, sans-serif" font-size="6.6" fill="#59616c" font-weight="bold">E</text>
<line x1="929" y1="147.5" x2="934" y2="147.5" stroke="#59616c" stroke-width="1.3"/>
<path d="M954.6 139.6a5.2 5.2 0 1 0 1.2 4.4" fill="none" stroke="#3f9a6a" stroke-width="1.8"/>
<path d="M956.6 136v5.2h-5.2z" fill="#3f9a6a"/>
<rect x="966.5" y="136.5" width="9.0" height="6.5" fill="#f4f8fb" stroke="#4a78a8" stroke-width="1.2"/>
<rect x="966" y="136" width="10" height="2.8" fill="#4a78a8"/>
<rect x="970.0" y="142.5" width="10.0" height="6.5" fill="#fff" stroke="#6a727c" stroke-width="1.2"/>
<rect x="969.5" y="142" width="11" height="2.8" fill="#6a727c"/>
<path d="M969 140.4h2.2M980 140.4h-2.2" fill="none" stroke="#4a78a8" stroke-width="1.1"/>
<rect x="853" y="155" width="140" height="93" fill="#ffffff"/>
<rect x="856.5" y="157.5" width="8.0" height="7.0" fill="#f4f8fb" stroke="#3f6f9f" stroke-width="1.2"/>
<rect x="856" y="157" width="9" height="2.8" fill="#3f6f9f"/>
<rect x="858.5" y="160.5" width="8.0" height="7.0" fill="#f4f8fb" stroke="#3f6f9f" stroke-width="1.2"/>
<rect x="858" y="160" width="9" height="2.8" fill="#3f6f9f"/>
<rect x="860.5" y="163.5" width="8.0" height="7.0" fill="#f4f8fb" stroke="#3f6f9f" stroke-width="1.2"/>
<rect x="860" y="163" width="9" height="2.8" fill="#3f6f9f"/>
<path d="M862.5 166.5v4M865 166.5v4" fill="none" stroke="#3f6f9f" stroke-width="0.8"/>
<text x="871.5" y="168.68" font-family="Liberation Sans, sans-serif" font-size="11.4" fill="#2a2a2a" textLength="70.0" lengthAdjust="spacingAndGlyphs">ProjectGroup1</text>
<path d="M858.8 182.5L863 187.10000000000002L867.2 182.5" fill="none" stroke="#555" stroke-width="1.2"/>
<rect x="872.5" y="179.0" width="11.5" height="11.0" fill="#f4f8fb" stroke="#3f6f9f" stroke-width="1.2"/>
<rect x="872" y="178.5" width="12.5" height="2.8" fill="#3f6f9f"/>
<text x="874" y="189.36" font-family="Liberation Sans, sans-serif" font-size="6.6" fill="#3f6f9f" font-weight="bold">E</text>
<path d="M880 184.4h2.2M880 187h2.2" fill="none" stroke="#3f6f9f" stroke-width="0.9"/>
<text x="888.5" y="189.42" font-family="Liberation Sans, sans-serif" font-size="11.8" fill="#111" font-weight="bold" textLength="55.5" lengthAdjust="spacingAndGlyphs">sdiapp.exe</text>
<path d="M875.8 200.2L880.2 204.5L875.8 208.8" fill="none" stroke="#555" stroke-width="1.2"/>
<circle cx="891.5" cy="201.5" r="2.4" fill="none" stroke="#3f6f9f" stroke-width="1.5"/>
<circle cx="896.5" cy="207" r="3" fill="none" stroke="#6a727c" stroke-width="1.7"/>
<text class="j" x="906.5" y="209.6" font-size="11.6" fill="#2a2a2a" textLength="52.8" lengthAdjust="spacingAndGlyphs">ビルド構成</text>
<text x="965" y="209.31" font-family="Liberation Sans, sans-serif" font-size="9.8" fill="#2a2a2a" textLength="11.5" lengthAdjust="spacingAndGlyphs">(D</text>
<path d="M875.8 220.2L880.2 224.5L875.8 228.8" fill="none" stroke="#555" stroke-width="1.2"/>
<path d="M890 219.5h8v9h-8z" fill="#d9685c"/>
<text class="j" x="906" y="229.4" font-size="11.6" fill="#2a2a2a" textLength="69" lengthAdjust="spacingAndGlyphs">ターゲット プラ</text>
<path d="M875.8 239.2L880.2 243.5L875.8 247.8" fill="none" stroke="#555" stroke-width="1.2"/>
<rect x="891.5" y="238.5" width="8.0" height="9.5" fill="#fff" stroke="#8a9098" stroke-width="1"/>
<text x="905.5" y="248.27" font-family="Liberation Sans, sans-serif" font-size="10.8" fill="#2a2a2a" textLength="54.0" lengthAdjust="spacingAndGlyphs">ABOUT.CPP</text>
<rect x="979" y="155" width="14" height="93" fill="#f3f3f3"/>
<rect x="979" y="170" width="14" height="29" fill="#d4d4d4"/>
<path d="M983.0 163.7L986 160.3L989.0 163.7" fill="none" stroke="#8a8a8a" stroke-width="1.2"/>
<path d="M983.0 238.3L986 241.7L989.0 238.3" fill="none" stroke="#8a8a8a" stroke-width="1.2"/>
<rect x="853" y="248" width="140" height="62" fill="#f5f5f5"/>
<text x="859.5" y="263.48" font-family="Liberation Sans, sans-serif" font-size="11.4" fill="#2a2a2a" textLength="61.5" lengthAdjust="spacingAndGlyphs">CodeInsight:</text>
<text class="j" x="924" y="263.6" font-size="12" fill="#2a2a2a" textLength="24.6" lengthAdjust="spacingAndGlyphs">停止</text>
<line x1="853" y1="268.5" x2="993" y2="268.5" stroke="#e2e2e2" stroke-width="1"/>
<rect x="853" y="288" width="37" height="20" fill="#ffffff"/>
<text x="859.5" y="302.68" font-family="Liberation Sans, sans-serif" font-size="11.4" fill="#1d62a6" font-weight="bold" textLength="25.0" lengthAdjust="spacingAndGlyphs">sdi...</text>
<text class="j" x="897.8" y="302.7" font-size="11" fill="#2a2a2a" textLength="9.6" lengthAdjust="spacingAndGlyphs">モ</text>
<text x="908.5" y="302.74" font-family="Liberation Sans, sans-serif" font-size="11" fill="#2a2a2a" textLength="7.5" lengthAdjust="spacingAndGlyphs">...</text>
<line x1="924.5" y1="291" x2="924.5" y2="305" stroke="#8a8a8a" stroke-width="1"/>
<text class="j" x="931.4" y="302.7" font-size="11" fill="#2a2a2a" textLength="10.6" lengthAdjust="spacingAndGlyphs">デ</text>
<text x="942.5" y="302.74" font-family="Liberation Sans, sans-serif" font-size="11" fill="#2a2a2a" textLength="7.5" lengthAdjust="spacingAndGlyphs">...</text>
<line x1="958.5" y1="291" x2="958.5" y2="305" stroke="#8a8a8a" stroke-width="1"/>
<text class="j" x="965.6" y="302.7" font-size="11" fill="#2a2a2a" textLength="10" lengthAdjust="spacingAndGlyphs">マ</text>
<text x="976.5" y="302.74" font-family="Liberation Sans, sans-serif" font-size="11" fill="#2a2a2a" textLength="7.5" lengthAdjust="spacingAndGlyphs">...</text>
<text class="j" x="857" y="335.8" font-size="13" fill="#1e1e1e" textLength="39.4" lengthAdjust="spacingAndGlyphs">パレット</text>
<path d="M960 326.0h4v5h-4zM958.5 331.0h7M962 331.0v4.5" fill="none" stroke="#222" stroke-width="1.1"/>
<line x1="963.5" y1="326.0" x2="963.5" y2="331.0" stroke="#222" stroke-width="1.3"/>
<path d="M975.3 326.3L983.7 334.7M983.7 326.3L975.3 334.7" fill="none" stroke="#444" stroke-width="1.1"/>
<rect x="853" y="342" width="140" height="23" fill="#f5f5f5"/>
<path d="M860.5 347.5h6l3.5 3.5v8h-9.5z" fill="#fcfcfc" stroke="#7b8189" stroke-width="1.1"/>
<path d="M866.5 354.5l5 2l-2 0.8l1.6 2l-1 0.8l-1.6-2l-1.2 1.6z" fill="#7a3fb0"/>
<path d="M878.0 352.2L880.5 354.8L883.0 352.2" fill="none" stroke="#888" stroke-width="1"/>
<rect x="888" y="343.5" width="19.5" height="19.5" fill="#8d9097"/>
<path d="M892.5 347.5l10 3.8l-3.8 1.7l3.4 4.2l-1.8 1.4l-3.3-4.2l-2.3 3z" fill="#8a3fb8"/>
<circle cx="981.0" cy="352.0" r="4.2" fill="none" stroke="#1d62a6" stroke-width="1.7"/>
<line x1="978.06" y1="354.94" x2="973.8" y2="359.2" stroke="#1d62a6" stroke-width="2.3"/>
<rect x="853" y="365" width="140" height="152" fill="#ffffff"/>
<path d="M859.8 372.5L864 377.1L868.2 372.5" fill="none" stroke="#555" stroke-width="1.2"/>
<text x="874.5" y="378.88" font-family="Liberation Sans, sans-serif" font-size="11.4" fill="#2a2a2a" textLength="43.0" lengthAdjust="spacingAndGlyphs">Standard</text>
<text x="887.5" y="398.28" font-family="Liberation Sans, sans-serif" font-size="11.4" fill="#2a2a2a" textLength="34.0" lengthAdjust="spacingAndGlyphs">Frames</text>
<text x="887.5" y="416.38" font-family="Liberation Sans, sans-serif" font-size="11.4" fill="#2a2a2a" textLength="57.0" lengthAdjust="spacingAndGlyphs">TMainMenu</text>
<text x="887.5" y="434.68" font-family="Liberation Sans, sans-serif" font-size="11.4" fill="#2a2a2a" textLength="64.0" lengthAdjust="spacingAndGlyphs">TPopupMenu</text>
<text x="887.5" y="453.08" font-family="Liberation Sans, sans-serif" font-size="11.4" fill="#2a2a2a" textLength="31.0" lengthAdjust="spacingAndGlyphs">TLabel</text>
<text x="887.5" y="471.08" font-family="Liberation Sans, sans-serif" font-size="11.4" fill="#2a2a2a" textLength="25.0" lengthAdjust="spacingAndGlyphs">TEdit</text>
<text x="887.5" y="489.28" font-family="Liberation Sans, sans-serif" font-size="11.4" fill="#2a2a2a" textLength="36.5" lengthAdjust="spacingAndGlyphs">TMemo</text>
<text x="887.5" y="507.68" font-family="Liberation Sans, sans-serif" font-size="11.4" fill="#2a2a2a" textLength="36.0" lengthAdjust="spacingAndGlyphs">TButton</text>
<rect x="872.5" y="389.5" width="10.0" height="9.5" fill="#f4f8fb" stroke="#6a7ea0" stroke-width="1.2"/>
<rect x="872" y="389" width="11" height="2.8" fill="#6a7ea0"/>
<rect x="874.5" y="393.5" width="6.0" height="4.0" fill="none" stroke="#8a9098" stroke-width="0.8" stroke-dasharray="1 1"/>
<rect x="871.5" y="407.5" width="11.5" height="2.4" fill="#5d6671"/>
<rect x="872" y="411" width="5" height="5.5" fill="#eef3f9" stroke="#4b78b0" stroke-width="1"/>
<rect x="873.5" y="424.5" width="7.0" height="8.0" fill="#dfe8f4" stroke="#4b6f9f" stroke-width="1.1"/>
<rect x="873" y="424" width="8" height="2.4" fill="#4b6f9f"/>
<path d="M878 431l4.5 4l-2 0.2l0.8 1.8l-1 0.4l-0.8-1.8l-1.5 1.3z" fill="#e0a040"/>
<text x="871.2" y="451.69" font-family="Liberation Sans, sans-serif" font-size="6.4" fill="#3a72b4" font-weight="bold" textLength="11.4" lengthAdjust="spacingAndGlyphs">Abc</text>
<rect x="871.5" y="463.5" width="12.0" height="7.0" fill="#f7f7f7" stroke="#7d838b" stroke-width="1"/>
<text x="872.6" y="468.78" font-family="Liberation Sans, sans-serif" font-size="4.4" fill="#8a8a8a" font-weight="bold" textLength="6.4" lengthAdjust="spacingAndGlyphs">Abc</text>
<rect x="872.5" y="478.5" width="9.0" height="13.0" fill="#fdf6e1" stroke="#e4c98a" stroke-width="1"/>
<path d="M874.5 482h5M874.5 484.5h5M874.5 487h5" fill="none" stroke="#e6d3a4" stroke-width="0.9"/>
<rect x="871.5" y="499.5" width="12" height="7.6" fill="#3b74b4" rx="1.2"/>
<rect x="874" y="502" width="7" height="2.4" fill="#cfe0f2"/>
<rect x="872" y="513.5" width="11" height="3.5" fill="#fff" stroke="#8a9098" stroke-width="1"/>
<rect x="980" y="365" width="13" height="152" fill="#f3f3f3"/>
<rect x="980" y="380" width="13" height="12" fill="#d4d4d4"/>
<path d="M983.5 373.7L986.5 370.3L989.5 373.7" fill="none" stroke="#8a8a8a" stroke-width="1.2"/>
<path d="M983.5 508.3L986.5 511.7L989.5 508.3" fill="none" stroke="#8a8a8a" stroke-width="1.2"/>
<rect x="34.8" y="117.6" width="912.8" height="354.4" fill="#6291c6" rx="24" opacity="0.3"/>
<defs><filter id="bs" x="-5%" y="-5%" width="110%" height="115%"><feGaussianBlur stdDeviation="0.6"/></filter></defs>
<g transform="translate(4,4)" opacity="0.5" filter="url(#bs)"><text class="j" font-size="90" font-weight="bold" fill="#4d535e"><tspan x="86" y="265" textLength="450" lengthAdjust="spacingAndGlyphs">スタイル（</tspan><tspan x="815" y="265">の</tspan><tspan x="361" y="392" textLength="267" lengthAdjust="spacingAndGlyphs">使い方</tspan></text><g transform="scale(1.5,1)"><text x="360" y="270" font-family="Liberation Serif, serif" font-size="107" fill="#4d535e" stroke="#4d535e" stroke-width="3.0" stroke-linejoin="miter" stroke-miterlimit="2.5" textLength="176.5" lengthAdjust="spacingAndGlyphs">Style)</text></g></g>
<text class="j" font-size="90" font-weight="bold" fill="#141414"><tspan x="86" y="265" textLength="450" lengthAdjust="spacingAndGlyphs">スタイル（</tspan><tspan x="815" y="265">の</tspan><tspan x="361" y="392" textLength="267" lengthAdjust="spacingAndGlyphs">使い方</tspan></text>
<g transform="scale(1.5,1)"><text x="360" y="270" font-family="Liberation Serif, serif" font-size="107" fill="#141414" stroke="#141414" stroke-width="3.0" stroke-linejoin="miter" stroke-miterlimit="2.5" textLength="176.5" lengthAdjust="spacingAndGlyphs">Style)</text></g>
</svg>
</body></html>
